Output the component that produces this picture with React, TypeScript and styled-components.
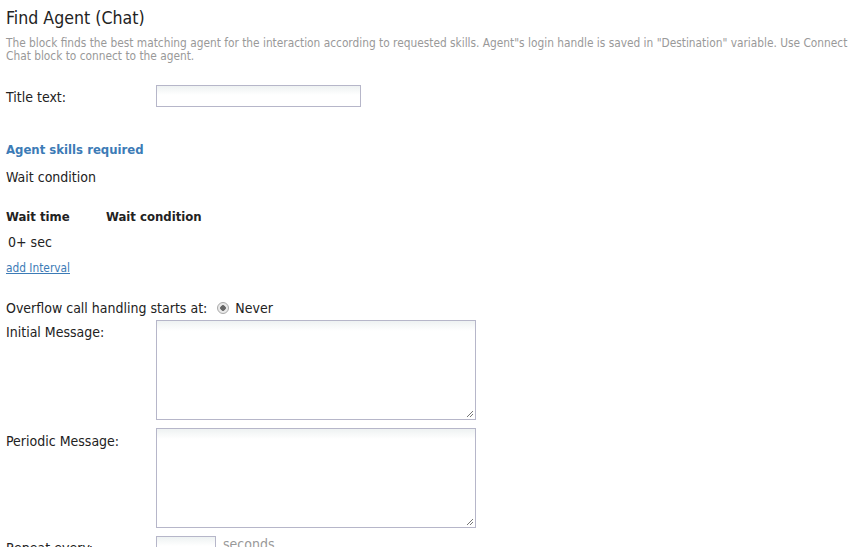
import React from "react";
import styled, { createGlobalStyle } from "styled-components";

const Global = createGlobalStyle`
  body {
    margin: 0;
    background: #ffffff;
    font-family: "DejaVu Sans Condensed", "DejaVu Sans", sans-serif;
    color: #222222;
    font-size: 14px;
  }
`;

const Page = styled.div`
  width: 853px;
  height: 547px;
  overflow: hidden;
  padding: 0 0 0 6px;
  box-sizing: border-box;
`;

const Title = styled.h1`
  margin: 0;
  padding-top: 8px;
  font-size: 17.6px;
  font-weight: normal;
  line-height: 20px;
  color: #222;
`;

const Description = styled.p`
  margin: 9px 0 0;
  font-size: 11.8px;
  line-height: 13px;
  color: #999999;
`;

const Row = styled.div<{ $top: number }>`
  display: flex;
  align-items: flex-start;
  margin-top: ${(p) => p.$top}px;
`;

const Label = styled.div<{ $pad?: number }>`
  width: 150px;
  flex: none;
  line-height: 16px;
  padding-top: ${(p) => p.$pad ?? 0}px;
`;

const TextInput = styled.div<{ $w: number }>`
  width: ${(p) => p.$w}px;
  height: 22px;
  box-sizing: border-box;
  border: 1px solid #b6b6c9;
  background: linear-gradient(#eef2f2, #ffffff 9px);
`;

const TextArea = styled.div`
  position: relative;
  width: 320px;
  height: 100px;
  box-sizing: border-box;
  border: 1px solid #b6b6c9;
  background: linear-gradient(#eef2f2, #ffffff 10px);
`;

const Grip = styled.svg`
  position: absolute;
  right: 1px;
  bottom: 1px;
`;

const SectionHead = styled.div<{ $top: number }>`
  margin-top: ${(p) => p.$top}px;
  font-size: 13px;
  font-weight: bold;
  color: #3c7bb6;
  line-height: 16px;
`;

const Plain = styled.div<{ $top: number; $indent?: number }>`
  margin-top: ${(p) => p.$top}px;
  padding-left: ${(p) => p.$indent ?? 0}px;
  line-height: 16px;
`;

const TableHead = styled.div`
  display: flex;
  margin-top: 24px;
  font-size: 13px;
  font-weight: bold;
  line-height: 16px;
`;

const HeadCell = styled.div<{ $w?: number }>`
  width: ${(p) => (p.$w ? `${p.$w}px` : "auto")};
`;

const Link = styled.a`
  display: block;
  margin-top: 11px;
  font-size: 11.8px;
  line-height: 14px;
  color: #3c7bb6;
  text-decoration: underline;
`;

const RadioGroup = styled.div`
  display: flex;
  align-items: center;
  gap: 6px;
  margin-left: 10px;
  line-height: 16px;
`;

const Radio = styled.span`
  width: 12px;
  height: 12px;
  box-sizing: border-box;
  border-radius: 50%;
  border: 1px solid #a9a9a9;
  background: radial-gradient(circle, #666 0 2.5px, #e9e9e9 3px);
`;

const Hint = styled.span`
  margin-left: 7px;
  color: #999;
  line-height: 16px;
`;

function ResizeGrip() {
  return (
    <Grip width="8" height="8" viewBox="0 0 8 8">
      <path d="M7 1 L1 7 M7 4 L4 7" stroke="#777" strokeWidth="1" />
    </Grip>
  );
}

export default function App() {
  return (
    <Page>
      <Global />
      <Title>Find Agent (Chat)</Title>
      <Description>
        The block finds the best matching agent for the interaction according
        to requested skills. Agent"s login handle is saved in "Destination"
        variable. Use Connect Chat block to connect to the agent.
      </Description>

      <Row $top={22}>
        <Label $pad={4}>Title text:</Label>
        <TextInput $w={205} />
      </Row>

      <SectionHead $top={35}>Agent skills required</SectionHead>
      <Plain $top={11}>Wait condition</Plain>

      <TableHead>
        <HeadCell $w={100}>Wait time</HeadCell>
        <HeadCell>Wait condition</HeadCell>
      </TableHead>
      <Plain $top={9} $indent={2}>
        0+ sec
      </Plain>
      <Link>add Interval</Link>

      <Row $top={25}>
        <span style={{ lineHeight: "16px" }}>Overflow call handling starts at:</span>
        <RadioGroup>
          <Radio />
          <span>Never</span>
        </RadioGroup>
      </Row>

      <Row $top={4}>
        <Label $pad={4}>Initial Message:</Label>
        <TextArea>
          <ResizeGrip />
        </TextArea>
      </Row>

      <Row $top={8}>
        <Label $pad={5}>Periodic Message:</Label>
        <TextArea>
          <ResizeGrip />
        </TextArea>
      </Row>

      <Row $top={8}>
        <Label $pad={4}>Repeat every:</Label>
        <TextInput $w={60} />
        <Hint>seconds</Hint>
      </Row>
    </Page>
  );
}
